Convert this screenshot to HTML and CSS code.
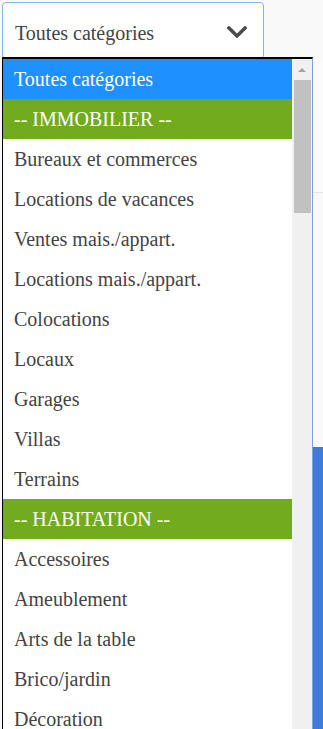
FILE: index.html
```html
<!DOCTYPE html>
<html lang="fr">
<head>
<meta charset="utf-8">
<title>Catégories</title>
<link rel="stylesheet" href="styles.css">
</head>
<body>
<div class="page">
  <div class="select-wrap">
    <div class="select">
      <span class="select-label">Toutes catégories</span>
      <svg class="chev" width="20" height="12" viewBox="0 0 20 12"><path d="M2 2 L10 10 L18 2" fill="none" stroke="#4a4a4a" stroke-width="3.4" stroke-linecap="square"/></svg>
    </div>
  </div>
  <div class="backdrop">
    <div class="bg-card"></div>
    <div class="bg-blue"></div>
  </div>

  <div class="dropdown">
    <ul class="options">
      <li class="opt selected">Toutes catégories</li>
      <li class="opt group">-- IMMOBILIER --</li>
      <li class="opt">Bureaux et commerces</li>
      <li class="opt">Locations de vacances</li>
      <li class="opt">Ventes mais./appart.</li>
      <li class="opt">Locations mais./appart.</li>
      <li class="opt">Colocations</li>
      <li class="opt">Locaux</li>
      <li class="opt">Garages</li>
      <li class="opt">Villas</li>
      <li class="opt">Terrains</li>
      <li class="opt group">-- HABITATION --</li>
      <li class="opt">Accessoires</li>
      <li class="opt">Ameublement</li>
      <li class="opt">Arts de la table</li>
      <li class="opt">Brico/jardin</li>
      <li class="opt">Décoration</li>
    </ul>
    <div class="scrollbar">
      <div class="arrow"></div>
      <div class="thumb"></div>
    </div>
  </div>
</div>
</body>
</html>
```

FILE: styles.css
```css
html, body {
  margin: 0;
  padding: 0;
}
body {
  background: #f9f9f9;
  font-family: "Liberation Serif", "Times New Roman", "DejaVu Serif", serif;
  width: 323px;
  height: 729px;
  overflow: hidden;
}
.page {
  position: relative;
  width: 323px;
  height: 729px;
  overflow: hidden;
}
.select-wrap {
  padding: 2px 0 0 2px;
}
.select {
  box-sizing: border-box;
  width: 262px;
  height: 57px;
  background: #fff;
  border: 1px solid #8ab0f0;
  border-radius: 4px;
  display: flex;
  align-items: center;
  justify-content: space-between;
  padding: 0 16px 0 12px;
}
.select-label {
  font-size: 20px;
  color: #444;
  position: relative;
  top: 3px;
}
.chev {
  display: block;
  position: relative;
  top: 1px;
}
.backdrop {
  display: flex;
  flex-direction: column;
  align-items: flex-end;
}
.bg-card {
  width: 10px;
  height: 133px;
  background: #fbfbfb;
  border-bottom: 1px solid #e4e4e4;
}
.bg-blue {
  margin-top: 254px;
  width: 10px;
  height: 300px;
  background: #3f7bd9;
}
.dropdown {
  position: absolute;
  left: 2px;
  top: 57px;
  width: 311px;
  height: 672px;
  box-sizing: border-box;
  border-top: 2px solid #000;
  border-left: 1px solid #000;
  border-right: 1px solid #7aa3e6;
  background: #fff;
  display: flex;
  overflow: hidden;
}
.options {
  list-style: none;
  margin: 0;
  padding: 0;
  flex: 1;
  min-width: 0;
}
.opt {
  height: 40px;
  line-height: 41px;
  padding-left: 11px;
  font-size: 20px;
  color: #444;
  white-space: nowrap;
}
.opt.selected {
  background: #1e90ff;
  color: #fff;
}
.opt.group {
  background: #72ac1e;
  color: #fff;
}
.scrollbar {
  width: 20px;
  flex: none;
  background: #f0f0f0;
  display: flex;
  flex-direction: column;
  align-items: center;
}
.arrow {
  margin-top: 9px;
  width: 0;
  height: 0;
  border-left: 4px solid transparent;
  border-right: 4px solid transparent;
  border-bottom: 4px solid #a3a3a3;
}
.thumb {
  margin-top: 8px;
  width: 17px;
  height: 133px;
  background: #c1c1c1;
}
```
